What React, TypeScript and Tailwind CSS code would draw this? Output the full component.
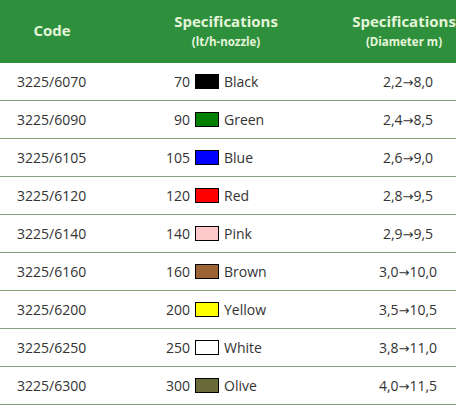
import React from 'react';

const rows = [
  { code: '3225/6070', flow: '70', color: 'Black', swatch: 'bg-[#000000]', from: '2,2', to: '8,0' },
  { code: '3225/6090', flow: '90', color: 'Green', swatch: 'bg-[#008000]', from: '2,4', to: '8,5' },
  { code: '3225/6105', flow: '105', color: 'Blue', swatch: 'bg-[#0000ff]', from: '2,6', to: '9,0' },
  { code: '3225/6120', flow: '120', color: 'Red', swatch: 'bg-[#ff0000]', from: '2,8', to: '9,5' },
  { code: '3225/6140', flow: '140', color: 'Pink', swatch: 'bg-[#ffc8cb]', from: '2,9', to: '9,5' },
  { code: '3225/6160', flow: '160', color: 'Brown', swatch: 'bg-[#9c6434]', from: '3,0', to: '10,0' },
  { code: '3225/6200', flow: '200', color: 'Yellow', swatch: 'bg-[#ffff00]', from: '3,5', to: '10,5' },
  { code: '3225/6250', flow: '250', color: 'White', swatch: 'bg-[#ffffff]', from: '3,8', to: '11,0' },
  { code: '3225/6300', flow: '300', color: 'Olive', swatch: 'bg-[#6b6b3a]', from: '4,0', to: '11,5' },
];

const App = () => {
  return (
    <div className="w-[456px] h-[409px] overflow-hidden bg-white font-['Open_Sans',sans-serif]">
      <div className="w-[460px]">
        {/* header */}
        <div className="grid grid-cols-[104px_244px_112px] h-[63px] bg-[#2e8f3d] text-[#e4f5da] font-bold">
          <div className="flex items-center justify-center text-[15px] pb-[2px]">Code</div>
          <div className="flex flex-col items-center justify-center pb-[2px]">
            <span className="text-[15px] leading-[20px]">Specifications</span>
            <span className="text-[11.5px] leading-[18px] mt-[2px]">(lt/h-nozzle)</span>
          </div>
          <div className="flex flex-col items-center justify-center pb-[2px]">
            <span className="text-[15px] leading-[20px]">Specifications</span>
            <span className="text-[11.5px] leading-[18px] mt-[2px]">(Diameter m)</span>
          </div>
        </div>

        {rows.map((r) => (
          <div
            key={r.code}
            className="grid grid-cols-[104px_244px_112px] h-[38px] border-b border-[#84a47c] text-[14px] text-[#333333]"
          >
            <div className="flex items-center pl-[17px]">{r.code}</div>
            <div className="flex items-center">
              <span className="w-[86px] text-right">{r.flow}</span>
              <span className={`ml-[5px] w-[24px] h-[15px] border border-black ${r.swatch}`} />
              <span className="ml-[5px]">{r.color}</span>
            </div>
            <div className="flex items-center justify-center pl-[8px]">
              <span>
                {r.from}
                <span className="font-['DejaVu_Sans',sans-serif] text-[13px]">→</span>
                {r.to}
              </span>
            </div>
          </div>
        ))}
      </div>
    </div>
  );
};

export default App;
